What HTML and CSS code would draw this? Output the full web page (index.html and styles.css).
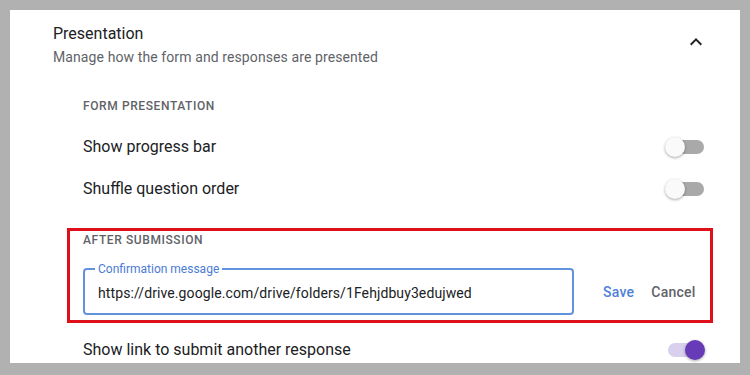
FILE: index.html
```html
<!DOCTYPE html>
<html lang="en">
<head>
<meta charset="utf-8">
<title>Presentation settings</title>
<link rel="stylesheet" href="styles.css">
</head>
<body>
<main class="card">
  <header class="header">
    <div class="heading">
      <h2 class="title">Presentation</h2>
      <p class="subtitle">Manage how the form and responses are presented</p>
    </div>
    <svg class="chevron" viewBox="0 0 24 24" width="24" height="24" aria-hidden="true"><path d="M12 8l-6 6 1.41 1.41L12 10.83l4.59 4.58L18 14z"/></svg>
  </header>

  <section class="group">
    <h3 class="group-label">Form presentation</h3>
    <div class="row">
      <span class="row-text">Show progress bar</span>
      <span class="toggle"><span class="thumb"></span></span>
    </div>
    <div class="row">
      <span class="row-text">Shuffle question order</span>
      <span class="toggle"><span class="thumb"></span></span>
    </div>
  </section>

  <section class="after">
    <h3 class="group-label">After submission</h3>
    <div class="edit-row">
      <div class="field">
        <span class="field-label">Confirmation message</span>
        <span class="field-value">https://drive.google.com/drive/folders/1Fehjdbuy3edujwed</span>
      </div>
      <div class="actions">
        <span class="btn btn-save">Save</span>
        <span class="btn btn-cancel">Cancel</span>
      </div>
    </div>
  </section>

  <section class="group">
    <div class="row">
      <span class="row-text">Show link to submit another response</span>
      <span class="toggle on"><span class="thumb"></span></span>
    </div>
  </section>
</main>
</body>
</html>
```

FILE: styles.css
```css
html, body {
  margin: 0;
  height: 375px;
  overflow: hidden;
}
body {
  background: #b2b1b1;
  padding: 10px 10px 0 10px;
  box-sizing: border-box;
  font-family: Roboto, "Liberation Sans", Arial, sans-serif;
  color: #202124;
}
.card {
  background: #ffffff;
  height: 353px;
  overflow: hidden;
  box-sizing: border-box;
  padding: 14px 32px 0 43px;
}
.header {
  display: flex;
  justify-content: space-between;
  align-items: flex-start;
}
.title {
  margin: 0;
  font-size: 16px;
  line-height: 20px;
  font-weight: 400;
  color: #202124;
}
.subtitle {
  margin: 3px 0 0;
  font-size: 14px;
  line-height: 20px;
  letter-spacing: 0.1px;
  color: #5f6368;
}
.chevron {
  margin-top: 6px;
  fill: #202124;
  flex: none;
}
.group {
  padding-left: 30px;
}
.group-label {
  margin: 31px 0 12px;
  font-size: 12px;
  line-height: 16px;
  font-weight: 500;
  letter-spacing: 0.6px;
  text-transform: uppercase;
  color: #5f6368;
}
.row {
  height: 42px;
  display: flex;
  align-items: center;
  justify-content: space-between;
  padding-right: 4px;
}
.row-text {
  font-size: 16px;
  line-height: 20px;
  color: #202124;
}
.toggle {
  width: 36px;
  height: 14px;
  border-radius: 7px;
  background: #a9a9a9;
  display: flex;
  align-items: center;
}
.thumb {
  width: 20px;
  height: 20px;
  border-radius: 50%;
  background: #fafafa;
  box-shadow: 0 1px 3px rgba(0, 0, 0, 0.35);
  margin-left: -3px;
  flex: none;
}
.toggle.on {
  background: #d8d0ec;
}
.toggle.on .thumb {
  background: #673ab7;
  margin-left: auto;
  margin-right: -1px;
}
.after {
  margin: 18px -5px 0 14px;
  border: 3px solid #e0101a;
  padding: 1px 14px 5px 13px;
}
.after .group-label {
  margin: 0 0 20px;
}
.edit-row {
  display: flex;
  align-items: center;
}
.field {
  position: relative;
  width: 491px;
  height: 47px;
  box-sizing: border-box;
  border: 2px solid #6393de;
  border-radius: 4px;
  padding: 2px 0 0 13px;
  display: flex;
  align-items: center;
}
.field-label {
  position: absolute;
  top: -8px;
  left: 10px;
  padding: 0 3px;
  background: #ffffff;
  font-size: 12px;
  line-height: 14px;
  color: #4a7bd5;
}
.field-value {
  font-size: 14px;
  line-height: 20px;
  letter-spacing: 0.1px;
  color: #202124;
}
.actions {
  display: flex;
  gap: 17px;
  margin-left: 29px;
}
.btn {
  font-size: 14px;
  line-height: 20px;
  font-weight: 500;
  letter-spacing: 0.25px;
}
.btn-save {
  color: #4f80d8;
}
.btn-cancel {
  color: #5f6368;
}
.after + .group .row {
  margin-top: 6px;
}
```
